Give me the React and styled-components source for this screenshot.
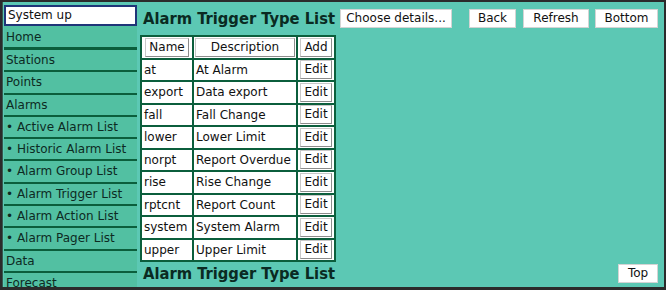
import React from "react";
import styled, { createGlobalStyle } from "styled-components";

const Global = createGlobalStyle`
  html, body { margin: 0; padding: 0; background: #5cc8b4; }
  body { font-family: "DejaVu Sans", Verdana, sans-serif; font-size: 12px; color: #0d2a22; }
  * { box-sizing: border-box; }
`;

const Frame = styled.div`
  width: 666px;
  height: 290px;
  border: 2px solid #2b2b2b;
  border-bottom-width: 3px;
  display: flex;
  overflow: hidden;
  background: #5cc8b4;
`;

const Side = styled.nav`
  width: 138px;
  flex: none;
  padding: 3px 3px 0 1px;
  display: flex;
  flex-direction: column;
  border-left: 1px solid #365a50;
`;

const Status = styled.div`
  height: 21px;
  flex: none;
  background: #fff;
  border: 2px solid #1f3578;
  padding: 0 2px;
  line-height: 17px;
  font-size: 12px;
  color: #111;
`;

const NavItem = styled.div`
  flex: none;
  height: ${(p) => (p.$thick ? 24 : 22.3)}px;
  line-height: ${(p) => (p.$thick ? 22 : 20)}px;
  padding-left: 2px;
  background: #52c0a2;
  border-bottom: ${(p) => (p.$thick ? 3 : 2)}px solid #0b5e3c;
  color: #0d2a22;
  white-space: nowrap;
  font-size: 12px;
`;

const Main = styled.main`
  flex: 1;
  padding: 6px 0 0 0;
  display: flex;
  flex-direction: column;
`;

const TopBar = styled.div`
  display: flex;
  align-items: center;
  height: 21px;
`;

const Title = styled.h1`
  margin: 0 0 0 3px;
  font-family: "DejaVu Sans", Verdana, sans-serif;
  font-stretch: condensed;
  font-size: 16.4px;
  font-weight: bold;
  color: #0a2a22;
  line-height: 20px;
  white-space: nowrap;
  flex: 1;
`;

const Btn = styled.button`
  font-family: "DejaVu Sans", Verdana, sans-serif;
  font-size: 12px;
  color: #111;
  background: #fff;
  border: 1px solid #d4d4d4;
  height: 19px;
  width: ${(p) => p.$w}px;
  padding: 0;
  margin-left: ${(p) => p.$ml ?? 0}px;
  line-height: 17px;
  cursor: pointer;
  flex: none;
`;

const Table = styled.table`
  margin-top: 6px;
  border: 0;
  background: #0b5e3c;
  border-spacing: 2px;
  width: 196px;
  table-layout: fixed;
`;

const Col = styled.col`
  width: ${(p) => p.$w}px;
`;

const Cell = styled.td`
  background: #fff;
  height: 20.5px;
  padding: 0 2px;
  font-size: 12px;
  color: #111;
  white-space: nowrap;
  overflow: hidden;
  text-align: ${(p) => (p.$center ? "center" : "left")};
`;

const HeadCell = styled.th`
  background: #fff;
  padding: 0;
  height: 20.5px;
  font-weight: normal;
  text-align: center;
`;

const CellBtn = styled.button`
  font-family: "DejaVu Sans", Verdana, sans-serif;
  font-size: 12px;
  color: #111;
  background: #fff;
  border: 1px solid #c8c8c8;
  border-right-color: #8c8c8c;
  border-bottom-color: #8c8c8c;
  height: 19px;
  width: ${(p) => p.$w}px;
  padding: 0;
  line-height: 17px;
  vertical-align: middle;
`;

const Footer = styled.div`
  display: flex;
  align-items: center;
  margin-top: 1px;
  height: 21px;
`;

const Spacer = styled.span`
  width: ${(p) => p.$w}px;
  flex: none;
`;

const rows = [
  ["at", "At Alarm"],
  ["export", "Data export"],
  ["fall", "Fall Change"],
  ["lower", "Lower Limit"],
  ["norpt", "Report Overdue"],
  ["rise", "Rise Change"],
  ["rptcnt", "Report Count"],
  ["system", "System Alarm"],
  ["upper", "Upper Limit"],
];

const nav = [
  { t: "Home", thick: true },
  { t: "Stations" },
  { t: "Points" },
  { t: "Alarms" },
  { t: "• Active Alarm List" },
  { t: "• Historic Alarm List" },
  { t: "• Alarm Group List" },
  { t: "• Alarm Trigger List" },
  { t: "• Alarm Action List" },
  { t: "• Alarm Pager List" },
  { t: "Data" },
  { t: "Forecast" },
];

export default function App() {
  return (
    <>
      <Global />
      <Frame>
        <Side>
          <Status>System up</Status>
          {nav.map((n) => (
            <NavItem key={n.t} $thick={n.thick}>
              {n.t}
            </NavItem>
          ))}
        </Side>
        <Main>
          <TopBar>
            <Title>Alarm Trigger Type List</Title>
            <Btn $w={112}>Choose details...</Btn>
            <Btn $w={47} $ml={17}>Back</Btn>
            <Btn $w={66} $ml={7}>Refresh</Btn>
            <Btn $w={63} $ml={6}>Bottom</Btn>
            <Spacer $w={6} />
          </TopBar>
          <div>
            <Table>
              <colgroup>
                <Col $w={50} />
                <Col $w={102} />
                <Col $w={36} />
              </colgroup>
              <thead>
                <tr>
                  <HeadCell><CellBtn $w={44}>Name</CellBtn></HeadCell>
                  <HeadCell><CellBtn $w={100}>Description</CellBtn></HeadCell>
                  <HeadCell><CellBtn $w={32}>Add</CellBtn></HeadCell>
                </tr>
              </thead>
              <tbody>
                {rows.map(([a, b]) => (
                  <tr key={a}>
                    <Cell>{a}</Cell>
                    <Cell>{b}</Cell>
                    <Cell $center><CellBtn $w={32}>Edit</CellBtn></Cell>
                  </tr>
                ))}
              </tbody>
            </Table>
          </div>
          <Footer>
            <Title>Alarm Trigger Type List</Title>
            <Btn $w={40}>Top</Btn>
            <Spacer $w={6} />
          </Footer>
        </Main>
      </Frame>
    </>
  );
}
